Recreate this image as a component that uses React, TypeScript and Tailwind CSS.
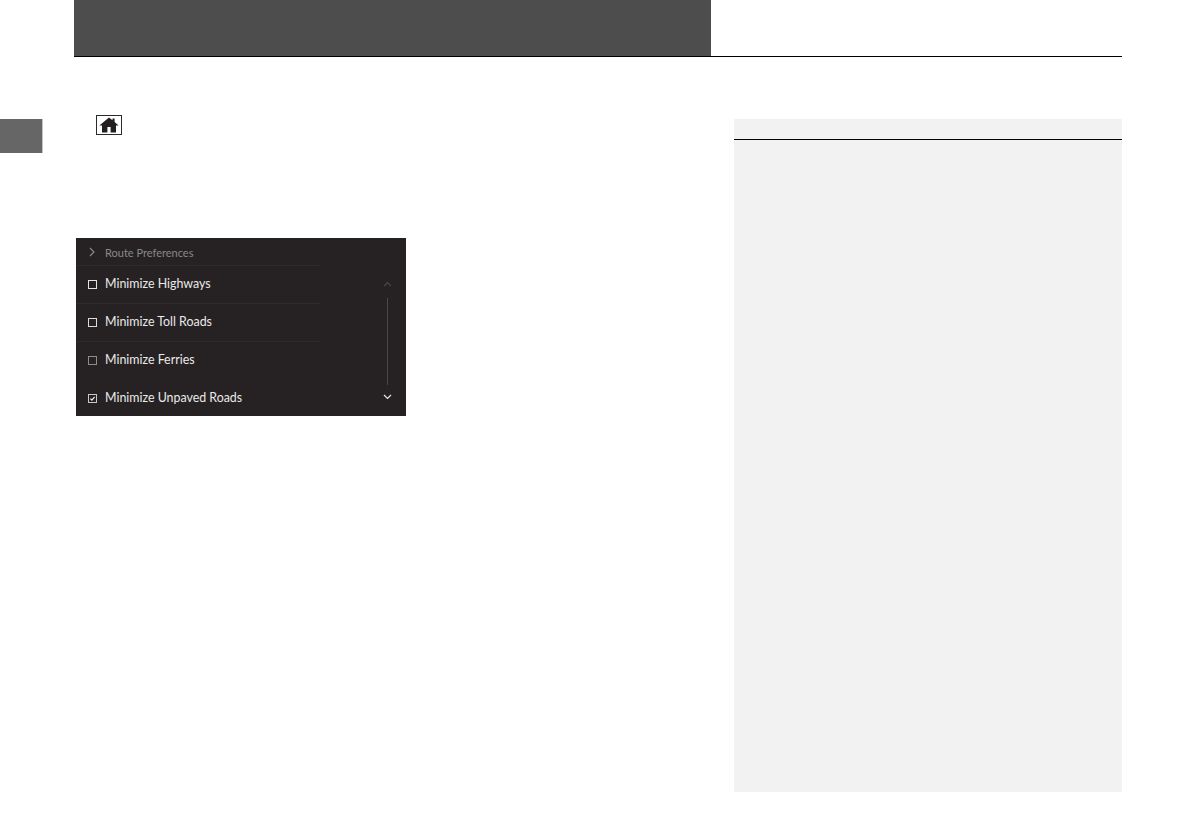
import React from "react";

const routes = [
  { label: "Minimize Highways", checked: false, box: "#e4e2e2" },
  { label: "Minimize Toll Roads", checked: false, box: "#dcdada" },
  { label: "Minimize Ferries", checked: false, box: "#8f8c8c" },
  { label: "Minimize Unpaved Roads", checked: true, box: "#c9c7c7" },
];

function Box({ checked, color }: { checked: boolean; color: string }) {
  return (
    <svg width="9" height="9" viewBox="0 0 9 9" fill="none" className="shrink-0">
      <rect x="0.5" y="0.5" width="8" height="8" stroke={color} strokeWidth="1" />
      {checked && <path d="M2.4 4.6 L3.9 6.1 L6.6 2.9" stroke="#f2f2f2" strokeWidth="1.2" />}
    </svg>
  );
}

function RoutePreferences() {
  return (
    <div className="w-[330px] h-[178px] ml-[-20px] mt-[103px] bg-[#262223] flex overflow-hidden font-['Lato',sans-serif]">
      <div className="w-[244px] flex flex-col shrink-0">
        <div className="h-[27px] shrink-0 pt-[1px] flex items-center">
          <svg width="6" height="10" viewBox="0 0 6 10" fill="none" className="ml-[13px]">
            <path d="M1 1 L5 5 L1 9" stroke="#8f8c8c" strokeWidth="1.1" />
          </svg>
          <span className="ml-[10px] text-[11px] leading-none text-[#8a8787]">Route Preferences</span>
        </div>
        {routes.map((r, i) => (
          <div
            key={r.label}
            className={`h-[38px] shrink-0 flex items-center border-t ${i < 3 ? "border-[#2f2b2c]" : "border-transparent"}`}
          >
            <div className="ml-[12px] flex items-center">
              <Box checked={r.checked} color={r.box} />
            </div>
            <span className="ml-[8px] text-[12.4px] leading-none text-[#ebe9e9]">{r.label}</span>
          </div>
        ))}
      </div>
      <div className="w-[22px] ml-[56px] shrink-0 flex flex-col items-center pt-[43px]">
        <svg width="9" height="6" viewBox="0 0 9 6" fill="none">
          <path d="M1 5 L4.5 1.5 L8 5" stroke="#4c4949" strokeWidth="1.1" />
        </svg>
        <div className="w-px h-[87px] mt-[11px] bg-[#4a4747]" />
        <svg width="9" height="6" viewBox="0 0 9 6" fill="none" className="mt-[9px]">
          <path d="M1 1 L4.5 4.5 L8 1" stroke="#e8e6e6" strokeWidth="1.2" />
        </svg>
      </div>
    </div>
  );
}

export default function App() {
  return (
    <div className="w-[1191px] h-[839px] bg-white overflow-hidden">
      <header className="ml-[74px] mr-[69px] h-[57px] border-b border-black">
        <div className="w-[637px] h-[56px] bg-[#4d4d4d]" />
      </header>

      <div className="flex">
        <div className="w-[43px] h-[34px] mt-[62px] bg-[#666666] border-r border-[#c4c4c4] shrink-0" />

        <div className="w-[691px] shrink-0 flex flex-col">
          <div className="ml-[53px] mt-[58px] w-[26px] h-[20px] border border-[#2a2a2a] flex items-center justify-center">
            <svg width="20" height="16" viewBox="0 0 20 16" fill="#231f20">
              <path d="M10 0.5 L13.5 3.2 V1.6 H15.6 V4.9 L19.6 8.4 H17 V15.5 H11.6 V10 H8.4 V15.5 H3 V8.4 H0.4 Z" />
            </svg>
          </div>
          <div className="ml-[53px]">
            <RoutePreferences />
          </div>
        </div>

        <aside className="w-[388px] h-[673px] mt-[62px] bg-[#f2f2f2]">
          <div className="h-[21px] border-b border-black" />
        </aside>
      </div>
    </div>
  );
}
